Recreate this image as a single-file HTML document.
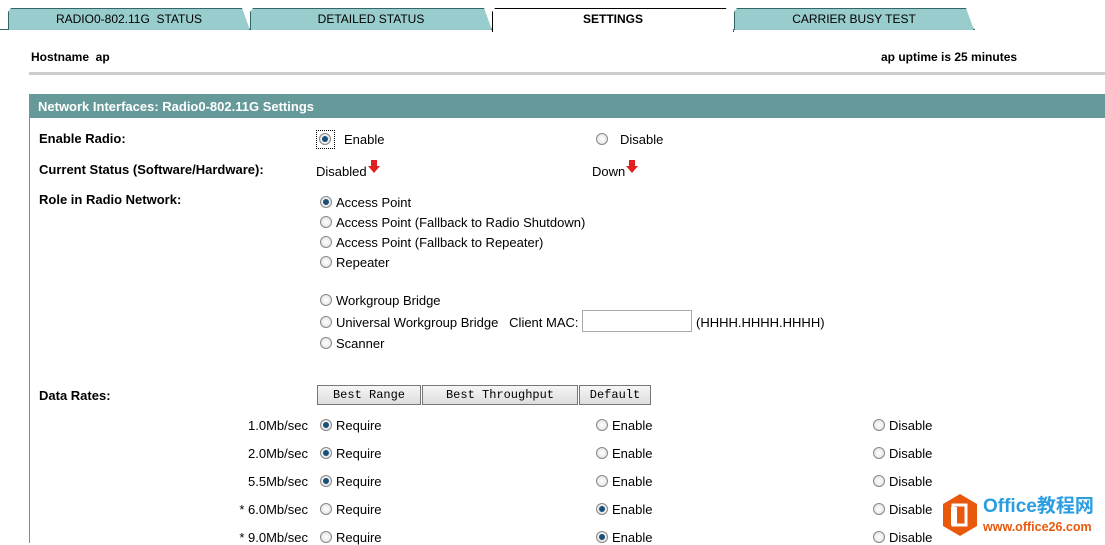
<!DOCTYPE html><html><head><style>
body{margin:0;width:1105px;height:543px;overflow:hidden;background:#fff;font-family:"Liberation Sans",Arial,sans-serif;position:relative}
.a{position:absolute;white-space:nowrap}
.tab{position:absolute;top:8px;height:21px;background:#99cccc;border:1px solid #336666;border-bottom:none;font-size:12px;text-align:center;line-height:20px;clip-path:polygon(3px 0,calc(100% - 8px) 0,100% 100%,0 100%,0 4px)}
.b{font-size:12px;font-weight:bold}
.l{font-size:13px;font-weight:bold}
.t{font-size:13px}
.r{position:absolute;width:10px;height:10px;border-radius:50%;border:1px solid #888;background:radial-gradient(#fff,#ddd)}
.r.on::after{content:"";position:absolute;left:2px;top:2px;width:6px;height:6px;border-radius:50%;background:#1a4f7a}
.btn{position:absolute;top:385px;height:18px;border:1px solid #777;background:linear-gradient(#f6f6f6,#ddd);font-family:"Liberation Mono",monospace;font-size:12px;text-align:center;line-height:18px}
.arr{position:absolute;width:0;height:0;border-left:6px solid transparent;border-right:6px solid transparent;border-top:7px solid #e02020}
.arr::before{content:"";position:absolute;left:-3px;top:-13px;width:6px;height:7px;background:#e02020}
</style></head><body>
<div style="position:absolute;left:0;top:29px;width:975px;height:1px;background:#336666"></div>
<div class="tab" style="left:8px;width:240px">RADIO0-802.11G &nbsp;STATUS</div>
<div class="tab" style="left:250px;width:240px">DETAILED STATUS</div>
<div class="tab" style="left:492px;width:240px;background:#fff;height:23px;border-color:#000;font-weight:bold">SETTINGS</div>
<div class="tab" style="left:734px;width:238px">CARRIER BUSY TEST</div>
<div class="a b" style="left:31px;top:50px">Hostname &nbsp;ap</div>
<div class="a b" style="left:881px;top:50px">ap uptime is 25 minutes</div>
<div style="position:absolute;left:29px;top:72px;width:1076px;height:3px;background:#ccc"></div>
<div style="position:absolute;left:30px;top:94px;width:1075px;height:24px;background:#669999"></div>
<div class="a" style="left:38px;top:99px;color:#fff;font-size:13px;font-weight:bold">Network Interfaces: Radio0-802.11G Settings</div>
<div style="position:absolute;left:29px;top:94px;width:1px;height:449px;background:#669999"></div>
<div class="a l" style="left:39px;top:131px">Enable Radio:</div>
<div style="position:absolute;left:316px;top:130px;width:17px;height:17px;border:1px dotted #000"></div>
<div class="r on" style="left:319px;top:133px"></div><div class="a t" style="left:344px;top:132px">Enable</div>
<div class="r" style="left:596px;top:133px"></div><div class="a t" style="left:620px;top:132px">Disable</div>
<div class="a l" style="left:39px;top:162px">Current Status (Software/Hardware):</div>
<div class="a t" style="left:316px;top:164px">Disabled</div><div class="arr" style="left:368px;top:166px"></div>
<div class="a t" style="left:592px;top:164px">Down</div><div class="arr" style="left:626px;top:166px"></div>
<div class="a l" style="left:39px;top:192px">Role in Radio Network:</div>
<div class="r on" style="left:320px;top:196px"></div><div class="a t" style="left:336px;top:195px">Access Point</div>
<div class="r" style="left:320px;top:216px"></div><div class="a t" style="left:336px;top:215px">Access Point (Fallback to Radio Shutdown)</div>
<div class="r" style="left:320px;top:236px"></div><div class="a t" style="left:336px;top:235px">Access Point (Fallback to Repeater)</div>
<div class="r" style="left:320px;top:256px"></div><div class="a t" style="left:336px;top:255px">Repeater</div>
<div class="r" style="left:320px;top:294px"></div><div class="a t" style="left:336px;top:293px">Workgroup Bridge</div>
<div class="r" style="left:320px;top:316px"></div><div class="a t" style="left:336px;top:315px">Universal Workgroup Bridge &nbsp;&nbsp;Client MAC:</div>
<div style="position:absolute;left:582px;top:310px;width:108px;height:20px;border:1px solid #aaa"></div>
<div class="a t" style="left:696px;top:315px">(HHHH.HHHH.HHHH)</div>
<div class="r" style="left:320px;top:337px"></div><div class="a t" style="left:336px;top:336px">Scanner</div>
<div class="a l" style="left:39px;top:388px">Data Rates:</div>
<div class="btn" style="left:317px;width:102px">Best Range</div>
<div class="btn" style="left:422px;width:154px">Best Throughput</div>
<div class="btn" style="left:579px;width:70px">Default</div>
<div class="a t" style="right:797px;top:418px">1.0Mb/sec</div>
<div class="a t" style="right:797px;top:446px">2.0Mb/sec</div>
<div class="a t" style="right:797px;top:474px">5.5Mb/sec</div>
<div class="a t" style="right:797px;top:502px">* 6.0Mb/sec</div>
<div class="a t" style="right:797px;top:530px">* 9.0Mb/sec</div>
<div class="r on" style="left:320px;top:419px"></div><div class="a t" style="left:336px;top:418px">Require</div>
<div class="r on" style="left:320px;top:447px"></div><div class="a t" style="left:336px;top:446px">Require</div>
<div class="r on" style="left:320px;top:475px"></div><div class="a t" style="left:336px;top:474px">Require</div>
<div class="r" style="left:320px;top:503px"></div><div class="a t" style="left:336px;top:502px">Require</div>
<div class="r" style="left:320px;top:531px"></div><div class="a t" style="left:336px;top:530px">Require</div>
<div class="r" style="left:596px;top:419px"></div><div class="a t" style="left:612px;top:418px">Enable</div>
<div class="r" style="left:596px;top:447px"></div><div class="a t" style="left:612px;top:446px">Enable</div>
<div class="r" style="left:596px;top:475px"></div><div class="a t" style="left:612px;top:474px">Enable</div>
<div class="r on" style="left:596px;top:503px"></div><div class="a t" style="left:612px;top:502px">Enable</div>
<div class="r on" style="left:596px;top:531px"></div><div class="a t" style="left:612px;top:530px">Enable</div>
<div class="r" style="left:873px;top:419px"></div><div class="a t" style="left:889px;top:418px">Disable</div>
<div class="r" style="left:873px;top:447px"></div><div class="a t" style="left:889px;top:446px">Disable</div>
<div class="r" style="left:873px;top:475px"></div><div class="a t" style="left:889px;top:474px">Disable</div>
<div class="r" style="left:873px;top:503px"></div><div class="a t" style="left:889px;top:502px">Disable</div>
<div class="r" style="left:873px;top:531px"></div><div class="a t" style="left:889px;top:530px">Disable</div>
<svg style="position:absolute;left:941px;top:493px" width="38" height="44" viewBox="0 0 38 44"><polygon points="19,1 36,11 36,33 19,43 2,33 2,11" fill="#e8590c"/><rect x="12" y="12" width="13" height="20" fill="none" stroke="#fff" stroke-width="3"/><rect x="10" y="14" width="6" height="18" fill="#fff"/></svg>
<div class="a" style="left:983px;top:496px;font-size:19px;font-weight:bold;color:#2a9ee0;font-family:'Liberation Sans','Noto Sans CJK SC',sans-serif;line-height:22px">Office教程网</div>
<div class="a" style="left:983px;top:520px;font-size:12.5px;font-weight:bold;color:#e8590c">www.office26.com</div>
</body></html>
